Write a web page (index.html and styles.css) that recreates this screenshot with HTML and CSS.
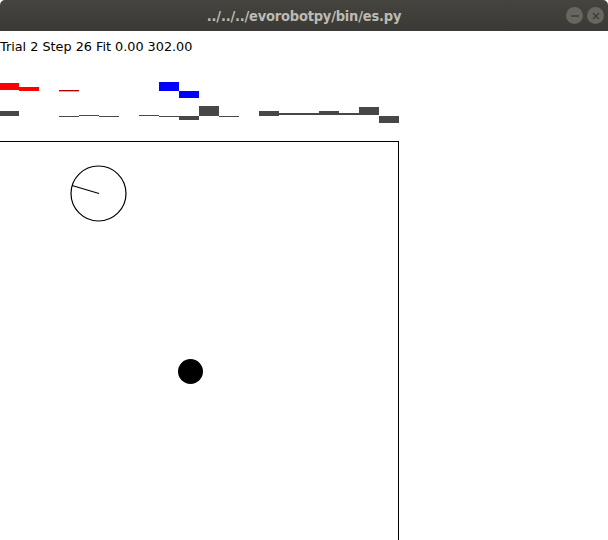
FILE: index.html
```html
<!DOCTYPE html>
<html>
<head>
<meta charset="utf-8">
<link rel="stylesheet" href="styles.css">
</head>
<body>
<div class="window">
  <div class="titlebar">
    <div class="title">../../../evorobotpy/bin/es.py</div>
    <div class="buttons">
      <span class="btn"><svg width="16" height="16" viewBox="0 0 16 16"><line x1="4" y1="8" x2="12" y2="8" stroke="#3f3e3a" stroke-width="1.5"/></svg></span>
      <span class="btn"><svg width="16" height="16" viewBox="0 0 16 16"><path d="M5 5 L11 11 M11 5 L5 11" stroke="#3f3e3a" stroke-width="1.5"/></svg></span>
    </div>
  </div>
  <div class="canvas">
    <svg class="scene" width="608" height="509" viewBox="0 31 608 509" shape-rendering="crispEdges">
      <text x="0" y="51" class="status">Trial 2 Step 26 Fit 0.00 302.00</text>
      <g fill="#ff0000">
        <rect x="0" y="83" width="19" height="7"/>
        <rect x="19" y="87" width="20" height="4"/>
      </g>
      <rect x="59" y="90" width="20" height="1" fill="#b00000"/>
      <rect x="59" y="91" width="20" height="1" fill="#f0a0a0"/>
      <g fill="#0000ff">
        <rect x="159" y="82" width="20" height="9"/>
        <rect x="179" y="91" width="20" height="7"/>
      </g>
      <g fill="#474747">
        <rect x="0" y="111" width="19" height="5"/>
        <rect x="59" y="116" width="20" height="1"/>
        <rect x="79" y="115" width="20" height="1"/>
        <rect x="99" y="116" width="20" height="1"/>
        <rect x="139" y="115" width="20" height="1"/>
        <rect x="159" y="116" width="20" height="1"/>
        <rect x="179" y="116" width="20" height="4"/>
        <rect x="199" y="106" width="20" height="10"/>
        <rect x="219" y="116" width="20" height="1"/>
        <rect x="259" y="111" width="20" height="5"/>
        <rect x="279" y="113" width="40" height="2"/>
        <rect x="319" y="111" width="20" height="4"/>
        <rect x="339" y="113" width="20" height="2"/>
        <rect x="359" y="107" width="20" height="8"/>
        <rect x="379" y="116" width="20" height="7"/>
      </g>
      <rect x="-1.5" y="141.5" width="400" height="420" fill="none" stroke="#000" stroke-width="1"/>
      <g shape-rendering="auto">
        <circle cx="98.5" cy="193.5" r="27.5" fill="none" stroke="#000" stroke-width="1.2"/>
        <line x1="99" y1="193.5" x2="72" y2="185.5" stroke="#000" stroke-width="1.2"/>
        <circle cx="190.5" cy="371.5" r="12.5" fill="#000"/>
      </g>
    </svg>
  </div>
</div>
</body>
</html>
```
FILE: styles.css
```css
html, body {
  margin: 0;
  padding: 0;
  background: #ffffff;
}
.window {
  width: 608px;
  height: 540px;
  overflow: hidden;
  display: flex;
  flex-direction: column;
}
.titlebar {
  height: 31px;
  flex: none;
  background: linear-gradient(#45443f, #3a3935);
  border-radius: 5px 5px 0 0;
  display: flex;
  align-items: center;
  justify-content: center;
  position: relative;
}
.title {
  font-family: "DejaVu Sans Condensed", "DejaVu Sans", sans-serif;
  font-stretch: condensed;
  font-weight: bold;
  font-size: 14.5px;
  color: #bdbab2;
  letter-spacing: -0.2px;
}
.buttons {
  position: absolute;
  right: 4px;
  top: 7px;
  display: flex;
  gap: 4px;
}
.btn {
  width: 17px;
  height: 17px;
  border-radius: 50%;
  background: #67665f;
  display: flex;
  align-items: center;
  justify-content: center;
}
.canvas {
  flex: 1;
}
.scene {
  display: block;
}
.status {
  font-family: "DejaVu Sans", sans-serif;
  font-size: 12.8px;
  fill: #000;
}
```
